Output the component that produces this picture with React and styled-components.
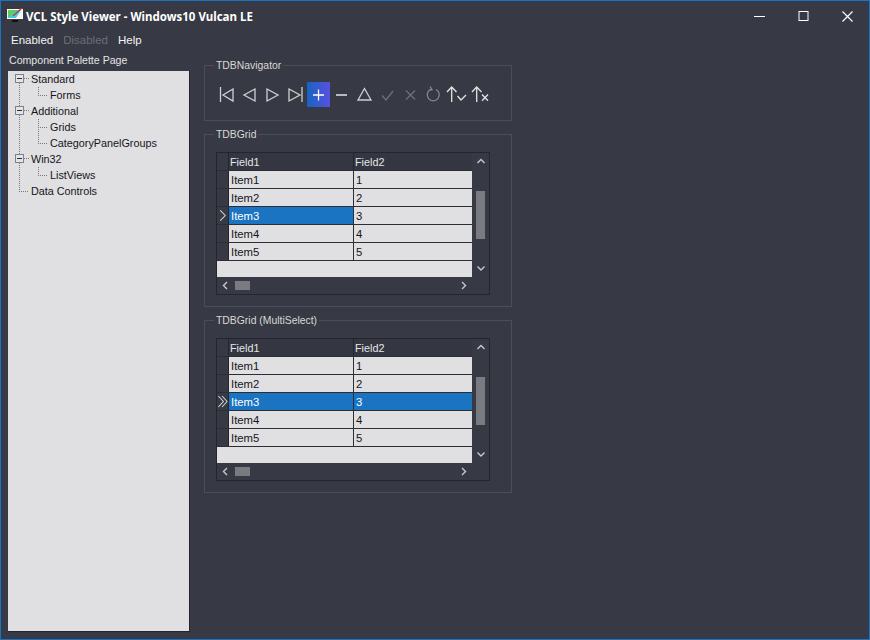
import React from "react";
import styled, { createGlobalStyle } from "styled-components";

const Global = createGlobalStyle`
  html, body { margin: 0; padding: 0; background: #373a44; }
  * { box-sizing: border-box; }
`;

const Win = styled.div`
  width: 870px; height: 640px; display: flex; flex-direction: column;
  background: #373a44; border: 1px solid #1a72c2; overflow: hidden;
  font-family: "Liberation Sans", Arial, sans-serif; font-size: 11.3px; color: #e6e6e6;
`;
const TitleBar = styled.div`
  height: 28px; display: flex; align-items: center; padding-left: 6px; flex: none;
`;
const TitleText = styled.div`
  margin-left: 3px; font-family: "Noto Sans", sans-serif; font-weight: 700; font-size: 11.5px; color: #fff; flex: 1; padding-top: 2px;
`;
const WinBtn = styled.div`
  width: 44px; height: 28px; display: flex; align-items: center; justify-content: center; color: #fff; padding-top: 2px;
`;
const MenuBar = styled.div`
  height: 21px; display: flex; padding-left: 10px; flex: none; align-items: center;
`;
const MenuItem = styled.div`
  font-size: 11.5px; color: ${p => (p.$off ? "#6c6e75" : "#f4f4f4")}; margin-right: ${p => p.$gap}px;
`;
const Main = styled.div`
  flex: 1; display: flex; min-height: 0; padding-left: 7px; padding-bottom: 7px;
`;
const Side = styled.div`
  width: 182px; display: flex; flex-direction: column;
`;
const SideLabel = styled.div`
  height: 21px; line-height: 20px; padding-left: 1px; font-size: 10.6px; color: #e4e4e4;
`;
const Tree = styled.div`
  flex: 1; background: #e0e0e2; border-right: 1px solid #24262c; border-bottom: 1px solid #24262c;
  color: #15151a; display: flex; flex-direction: column; font-size: 10.8px;
`;
const TreeRow = styled.div`
  height: 16px; display: flex; align-items: center; line-height: 16px; white-space: nowrap;
`;
const Gutter = styled.svg`
  flex: none; display: block;
`;
const Content = styled.div`
  margin-left: 14px; padding-top: 7px; width: 308px; display: flex; flex-direction: column; gap: 5px;
`;
const Group = styled.fieldset`
  margin: 0; padding: 0 11px; border: 1px solid #4b4e58; height: ${p => p.$h}px; min-width: 0;
`;
const Legend = styled.legend`
  margin-left: -2px; padding: 2px 2px 0; font-size: 10.4px; line-height: 14px; color: #d8d8d8;
`;
const NavBar = styled.div`
  display: flex; margin-top: 9px; margin-left: -1px;
`;
const NavBtn = styled.div`
  width: 23px; height: 25px; background: ${p => (p.$on ? "linear-gradient(90deg,#1565c0,#5a50e0)" : "transparent")};
  svg { display: block; }
`;
const GridFrame = styled.div`
  margin-top: 10px; width: 274px; height: 143px; border: 1px solid #24262c; display: flex; flex-direction: column; background: #373a44;
`;
const GridBody = styled.div`
  flex: 1; display: flex; min-height: 0;
`;
const Table = styled.div`
  flex: 1; background: #e0e0e2; display: flex; flex-direction: column;
`;
const Row = styled.div`
  height: 18px; flex: none; display: grid; grid-template-columns: 12px 125px 1fr; border-bottom: 1px solid #2c2e35;
`;
const HeaderRow = styled(Row)`
  background: #343741; color: #e6e6e6;
`;
const Indicator = styled.div`
  background: #373a44; border-right: 1px solid #24262c; display: flex; align-items: center; justify-content: center;
`;
const Cell = styled.div`
  padding: 1px 0 0 2px; line-height: 17px; white-space: nowrap; overflow: hidden; border-right: ${p => (p.$last ? "0" : "1px solid #2c2e35")};
  background: ${p => (p.$sel ? "#1b74c1" : "transparent")}; color: ${p => (p.$sel ? "#fff" : "#15151a")};
`;
const HeadCell = styled(Cell)`
  padding-left: 1px; font-size: 10.8px; color: #e6e6e6; background: transparent; border-right-color: #24262c;
`;
const VScroll = styled.div`
  width: 17px; flex: none; display: flex; flex-direction: column; background: #373a44;
`;
const ArrowBox = styled.div`
  width: 17px; height: 17px; flex: none; display: flex; align-items: center; justify-content: center;
  margin-top: ${p => (p.$end ? "auto" : "0")};
`;
const VThumb = styled.div`
  width: 9px; height: 48px; background: #7a7b81; margin: 21px 0 0 4px;
`;
const HScroll = styled.div`
  height: 17px; flex: none; display: flex; align-items: center; padding-right: 17px;
`;
const HThumb = styled.div`
  width: 15px; height: 9px; background: #7a7b81; margin-left: 1px; margin-right: auto;
`;

const Chev = ({ d }) => {
  const paths = { up: "M1.5 6 L5 2.5 L8.5 6", down: "M1.5 2.5 L5 6 L8.5 2.5", left: "M6 1 L2.5 4.5 L6 8", right: "M3 1 L6.5 4.5 L3 8" };
  return <svg width="10" height="9" viewBox="0 0 10 9"><path d={paths[d]} fill="none" stroke="#c8c8cc" strokeWidth="1.4" /></svg>;
};

const On = "#d0d0d2", Off = "#6e7076", Ref = "#85878c";
const navIcons = [
  { c: On, d: "M5.5 5V20M18 7L8 13L18 19Z" },
  { c: On, d: "M17 7L6 13L17 19Z" },
  { c: On, d: "M6 7L17 13L6 19Z" },
  { c: On, d: "M5 7L16 13L5 19ZM18 5V20" },
  { c: "#fff", d: "M6 13H17M11.5 7.5V18.5", on: true },
  { c: "#fff", d: "M6 13H17" },
  { c: On, d: "M11.5 6.5L18 18H5Z" },
  { c: Off, d: "M6 13.5L10 18L17 9" },
  { c: Off, d: "M7 8.5L16 17.5M16 8.5L7 17.5" },
  { c: Ref, d: "M8.5 7.5A6 6 0 1 0 14 7.5M8 4.5L10 7.7L6.5 8.7" },
  { c: "#e4e4e4", d: "M6.7 5V20M2 10L6.7 5L11.5 10M12.5 14L16 18L21 13" },
  { c: "#e4e4e4", d: "M8.7 5V20M4 10L8.7 5L13.5 10M14 12.5L20 18.7M20 12.5L14 18.7" },
];

const TreeLines = ({ w, d, box }) => (
  <Gutter width={w} height="16" viewBox={`0 0 ${w} 16`}>
    <path d={d} fill="none" stroke="#77777c" strokeDasharray="1 1" shapeRendering="crispEdges" />
    {box && (
      <g shapeRendering="crispEdges">
        <rect x="7.5" y="3.5" width="8" height="8" fill="#e4e4e6" stroke="#80828a" />
        <path d="M9 7.5H14" stroke="#2a2c33" />
      </g>
    )}
  </Gutter>
);

const treeData = [
  { t: "Standard", w: 23, box: true, d: "M16 7.5H21M11.5 12V16" },
  { t: "Forms", w: 42, d: "M11.5 0V16M30.5 0V8.5M30 8.5H40" },
  { t: "Additional", w: 23, box: true, d: "M16 7.5H21M11.5 0V3M11.5 12V16" },
  { t: "Grids", w: 42, d: "M11.5 0V16M30.5 0V16M30 8.5H40" },
  { t: "CategoryPanelGroups", w: 42, d: "M11.5 0V16M30.5 0V8.5M30 8.5H40" },
  { t: "Win32", w: 23, box: true, d: "M16 7.5H21M11.5 0V3M11.5 12V16" },
  { t: "ListViews", w: 42, d: "M11.5 0V16M30.5 0V8.5M30 8.5H40" },
  { t: "Data Controls", w: 23, d: "M11.5 0V8.5M11 8.5H21" },
];

const rows = ["1", "2", "3", "4", "5"];

const DbGrid = ({ multi }) => (
  <GridFrame>
    <GridBody>
      <Table>
        <HeaderRow>
          <Indicator />
          <HeadCell>Field1</HeadCell>
          <HeadCell $last>Field2</HeadCell>
        </HeaderRow>
        {rows.map(n => {
          const cur = n === "3";
          return (
            <Row key={n}>
              <Indicator>
                {cur && (
                  <svg width="12" height="17" viewBox="0 0 12 17">
                    <path d={multi ? "M1.5 2.5L7 8.5L1.5 14.5M5.5 2.5L11 8.5L5.5 14.5" : "M3.5 3L9 8.5L3.5 14"} fill="none" stroke="#dcdcdc" strokeWidth="1.1" />
                  </svg>
                )}
              </Indicator>
              <Cell $sel={cur}>Item{n}</Cell>
              <Cell $last $sel={cur && multi}>{n}</Cell>
            </Row>
          );
        })}
      </Table>
      <VScroll>
        <ArrowBox><Chev d="up" /></ArrowBox>
        <VThumb />
        <ArrowBox $end><Chev d="down" /></ArrowBox>
      </VScroll>
    </GridBody>
    <HScroll>
      <ArrowBox><Chev d="left" /></ArrowBox>
      <HThumb />
      <ArrowBox><Chev d="right" /></ArrowBox>
    </HScroll>
  </GridFrame>
);

export default function App() {
  return (
    <Win>
      <Global />
      <TitleBar>
        <svg width="16" height="15" viewBox="0 0 16 15">
          <rect x="0" y="1" width="16" height="10" fill="#fff" />
          <rect x="1" y="2" width="14" height="8" fill="#3fd0f0" />
          <path d="M1 2H11L4 8L1 10Z" fill="#5ecb6a" />
          <path d="M9 10L14 2H15V10Z" fill="#f4f4f4" />
          <path d="M6 8L15 0" stroke="#c0392b" strokeWidth="1.4" />
          <path d="M5 12H11V14H5Z" fill="#111" />
        </svg>
        <TitleText>VCL Style Viewer - Windows10 Vulcan LE</TitleText>
        <WinBtn><svg width="11" height="11" viewBox="0 0 11 11"><path d="M0 5.5H11" stroke="#fff" /></svg></WinBtn>
        <WinBtn><svg width="11" height="11" viewBox="0 0 11 11"><rect x="1" y="0.5" width="9" height="9" fill="none" stroke="#fff" /></svg></WinBtn>
        <WinBtn><svg width="11" height="11" viewBox="0 0 11 11"><path d="M0.5 0.5L10.5 10.5M10.5 0.5L0.5 10.5" stroke="#fff" strokeWidth="1.2" /></svg></WinBtn>
      </TitleBar>
      <MenuBar>
        <MenuItem $gap={10}>Enabled</MenuItem>
        <MenuItem $off $gap={10}>Disabled</MenuItem>
        <MenuItem $gap={0}>Help</MenuItem>
      </MenuBar>
      <Main>
        <Side>
          <SideLabel>Component Palette Page</SideLabel>
          <Tree>
            {treeData.map(r => (
              <TreeRow key={r.t}>
                <TreeLines w={r.w} d={r.d} box={r.box} />
                {r.t}
              </TreeRow>
            ))}
          </Tree>
        </Side>
        <Content>
          <Group $h={64}>
            <Legend>TDBNavigator</Legend>
            <NavBar>
              {navIcons.map((ic, i) => (
                <NavBtn key={i} $on={ic.on}>
                  <svg width="23" height="25" viewBox="0 0 23 25">
                    <path d={ic.d} fill="none" stroke={ic.c} strokeWidth="1.3" />
                  </svg>
                </NavBtn>
              ))}
            </NavBar>
          </Group>
          <Group $h={181}>
            <Legend>TDBGrid</Legend>
            <DbGrid />
          </Group>
          <Group $h={181}>
            <Legend>TDBGrid (MultiSelect)</Legend>
            <DbGrid multi />
          </Group>
        </Content>
      </Main>
    </Win>
  );
}
